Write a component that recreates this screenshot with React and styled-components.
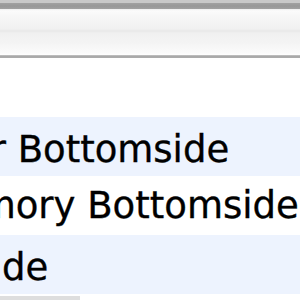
import React from 'react';
import styled, { createGlobalStyle } from 'styled-components';

const GlobalStyle = createGlobalStyle`
    html, body {
        margin: 0;
        padding: 0;
        background: #ffffff;
        overflow: hidden;
    }
    #root {
        width: 300px;
        height: 300px;
        overflow: hidden;
    }
`;

const Window = styled.div`
    width: 300px;
    height: 300px;
    display: flex;
    flex-direction: column;
    background: #ffffff;
    overflow: hidden;
    position: relative;
`;

const TopEdge = styled.div`
    height: 9px;
    flex: none;
    background: linear-gradient(to bottom,
        #c9c9c9 0px, #c9c9c9 3px,
        #a2a2a2 3px, #989898 6px, #a2a2a2 9px);
`;

const ColumnHeader = styled.div`
    height: 46px;
    flex: none;
    background: linear-gradient(to bottom,
        #f0f0f0 0px, #fbfbfb 2px, #f6f6f6 8px,
        #f0f0f0 20px, #e8e8e8 22px, #f0f0f0 24px,
        #f4f4f4 34px, #fbfbfb 44px, #ffffff 46px);
`;

const HeaderBorder = styled.div`
    height: 3px;
    flex: none;
    background: linear-gradient(to bottom, #cfcfcf 0px, #a8a8a8 1px, #acacac 3px);
`;

// the list is scrolled sideways, so names start left of the view
const List = styled.div`
    flex: none;
    display: flex;
    flex-direction: column;
    margin-left: -110px;
`;

const Row = styled.div`
    height: 59px;
    flex: none;
    display: flex;
    align-items: flex-start;
    background: ${p => (p.$odd ? '#edf3fe' : '#ffffff')};
    padding-left: ${p => p.$indent}px;
    box-sizing: border-box;
`;

const Label = styled.span`
    font-family: "DejaVu Sans", "Lucida Grande", Verdana, sans-serif;
    font-size: 37px;
    line-height: 59px;
    color: #000000;
    -webkit-text-stroke: 0.35px #000000;
    white-space: nowrap;
    position: relative;
    top: ${p => p.$shift}px;
`;

const ScrollThumb = styled.div`
    position: absolute;
    left: 0;
    bottom: 0;
    width: 80px;
    height: 4px;
    background: #dedede;
`;

const rows = [
    { name: '', indent: 0, shift: 0 },
    { name: 'Power Bottomside', indent: 4, shift: 3 },
    { name: 'Memory Bottomside', indent: 35, shift: 0 },
    { name: 'Topside', indent: 20, shift: 3 },
];

export default function App() {
    return (
        <Window>
            <GlobalStyle />
            <TopEdge />
            <ColumnHeader />
            <HeaderBorder />
            <List>
                {rows.map((r, i) => (
                    <Row key={i} $odd={i % 2 === 1} $indent={r.indent}>
                        <Label $shift={r.shift}>{r.name}</Label>
                    </Row>
                ))}
            </List>
            <ScrollThumb />
        </Window>
    );
}
